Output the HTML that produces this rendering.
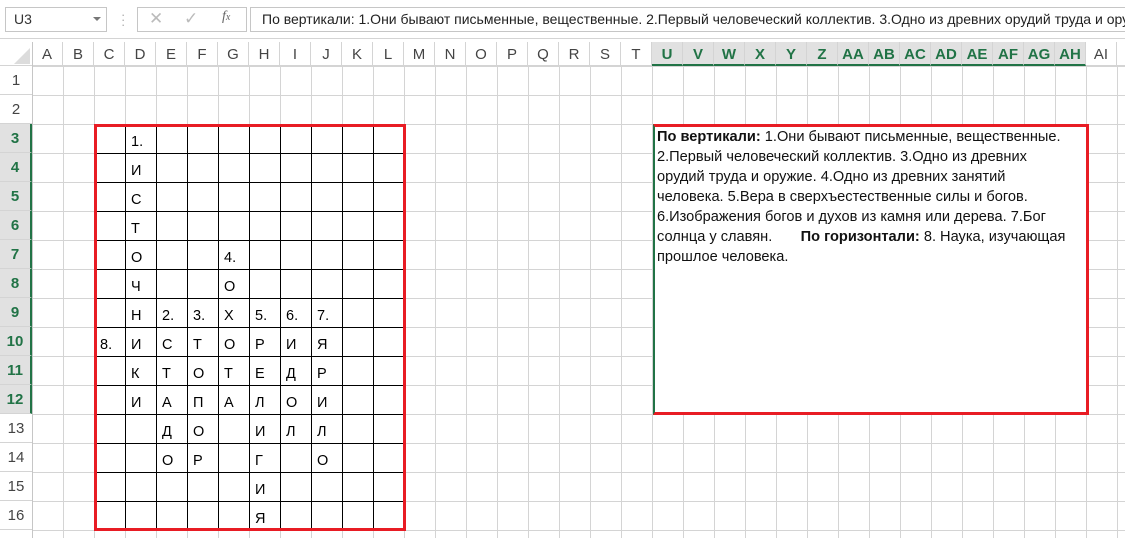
<!DOCTYPE html>
<html><head><meta charset="utf-8"><style>
*{margin:0;padding:0;box-sizing:border-box}
body{width:1125px;height:538px;overflow:hidden;background:#fff;font-family:"Liberation Sans","DejaVu Sans",sans-serif;position:relative}
.a{position:absolute}
#grid{left:32px;top:66px;width:1093px;height:472px;
background-image:linear-gradient(to right,#d4d4d4 1px,transparent 1px),linear-gradient(to bottom,#d4d4d4 1px,transparent 1px);
background-size:31px 29px;background-position:0 0}
.ch{position:absolute;top:42px;height:24px;width:31px;text-align:center;font-size:15px;line-height:25px;color:#444;border-right:1px solid #d4d4d4}
.ch.s{background:#e1e1e1;color:#217346;font-weight:bold;border-bottom:2px solid #217346}
.rh{position:absolute;left:0;width:32px;height:29px;text-align:center;font-size:15px;line-height:30px;color:#444;border-bottom:1px solid #d4d4d4}
.rh.s{background:#e1e1e1;color:#217346;font-weight:bold;border-right:2px solid #217346}
.c{position:absolute;font-size:14.5px;color:#000;line-height:29px;padding-left:6px;padding-top:4px}
#cw{left:94px;top:124px;width:312px;height:407px;background-color:#fff;
background-image:linear-gradient(to right,#000 1px,transparent 1px),linear-gradient(to bottom,#000 1px,transparent 1px);
background-size:31px 29px;background-position:0 0;background-origin:border-box;background-clip:border-box;border:3px solid #e81c24}
#tb{left:653px;top:124px;width:436px;height:291px;background:#fff;border:3px solid #e81c24;border-left:2px solid #217346}
#tb div{font-size:14.6px;line-height:20px;white-space:nowrap;color:#111}
</style></head><body>
<div class="a" style="left:0;top:0;width:1125px;height:40px;background:#fff"></div>
<div class="a" style="left:5px;top:7px;width:102px;height:25px;border:1px solid #c6c6c6;font-size:14px;line-height:23px;padding-left:8px;color:#333">U3</div>
<div class="a" style="left:93px;top:17px;width:0;height:0;border-left:4px solid transparent;border-right:4px solid transparent;border-top:4px solid #777"></div>
<div class="a" style="left:121px;top:12px;color:#aaa;font-size:13px;line-height:5px">·<br>·<br>·</div>
<div class="a" style="left:137px;top:7px;width:110px;height:25px;border:1px solid #c6c6c6"></div>
<div class="a" style="left:149px;top:9px;color:#bbb;font-size:17px">✕</div>
<div class="a" style="left:184px;top:9px;color:#bbb;font-size:17px">✓</div>
<div class="a" style="left:222px;top:9px;color:#666;font-size:14px;font-style:italic;font-family:'Liberation Serif',serif">f<span style="font-size:10px">x</span></div>
<div class="a" style="left:250px;top:7px;width:880px;height:25px;border:1px solid #c6c6c6;font-size:14px;line-height:23px;padding-left:11px;white-space:nowrap;overflow:hidden;color:#222">По вертикали: 1.Они бывают письменные, вещественные. 2.Первый человеческий коллектив. 3.Одно из древних орудий труда и оружие.</div>
<div class="a" style="left:0;top:38px;width:1125px;height:1px;background:#d4d4d4"></div>

<div id="grid" class="a"></div>
<div class="a" style="left:0;top:42px;width:1125px;height:24px;border-bottom:1px solid #d4d4d4"></div>
<div class="a" style="left:14px;top:48px;width:0;height:0;border-left:16px solid transparent;border-bottom:16px solid #dcdcdc"></div>
<div class="a" style="left:32px;top:42px;width:1px;height:496px;background:#c6c6c6"></div>

<div class="ch" style="left:32px">A</div><div class="ch" style="left:63px">B</div><div class="ch" style="left:94px">C</div><div class="ch" style="left:125px">D</div><div class="ch" style="left:156px">E</div><div class="ch" style="left:187px">F</div><div class="ch" style="left:218px">G</div><div class="ch" style="left:249px">H</div><div class="ch" style="left:280px">I</div><div class="ch" style="left:311px">J</div><div class="ch" style="left:342px">K</div><div class="ch" style="left:373px">L</div><div class="ch" style="left:404px">M</div><div class="ch" style="left:435px">N</div><div class="ch" style="left:466px">O</div><div class="ch" style="left:497px">P</div><div class="ch" style="left:528px">Q</div><div class="ch" style="left:559px">R</div><div class="ch" style="left:590px">S</div><div class="ch" style="left:621px">T</div>
<div class="ch s" style="left:652px">U</div><div class="ch s" style="left:683px">V</div><div class="ch s" style="left:714px">W</div><div class="ch s" style="left:745px">X</div><div class="ch s" style="left:776px">Y</div><div class="ch s" style="left:807px">Z</div><div class="ch s" style="left:838px">AA</div><div class="ch s" style="left:869px">AB</div><div class="ch s" style="left:900px">AC</div><div class="ch s" style="left:931px">AD</div><div class="ch s" style="left:962px">AE</div><div class="ch s" style="left:993px">AF</div><div class="ch s" style="left:1024px">AG</div><div class="ch s" style="left:1055px">AH</div><div class="ch" style="left:1086px">AI</div>

<div class="rh" style="top:66px">1</div><div class="rh" style="top:95px">2</div>
<div class="rh s" style="top:124px">3</div><div class="rh s" style="top:153px">4</div><div class="rh s" style="top:182px">5</div><div class="rh s" style="top:211px">6</div><div class="rh s" style="top:240px">7</div><div class="rh s" style="top:269px">8</div><div class="rh s" style="top:298px">9</div><div class="rh s" style="top:327px">10</div><div class="rh s" style="top:356px">11</div><div class="rh s" style="top:385px">12</div>
<div class="rh" style="top:414px">13</div><div class="rh" style="top:443px">14</div><div class="rh" style="top:472px">15</div><div class="rh" style="top:501px">16</div>

<div id="cw" class="a"></div>
<div class="c" style="left:125px;top:124px">1.</div>
<div class="c" style="left:125px;top:153px">И</div>
<div class="c" style="left:125px;top:182px">С</div>
<div class="c" style="left:125px;top:211px">Т</div>
<div class="c" style="left:125px;top:240px">О</div>
<div class="c" style="left:218px;top:240px">4.</div>
<div class="c" style="left:125px;top:269px">Ч</div>
<div class="c" style="left:218px;top:269px">О</div>
<div class="c" style="left:125px;top:298px">Н</div>
<div class="c" style="left:156px;top:298px">2.</div>
<div class="c" style="left:187px;top:298px">3.</div>
<div class="c" style="left:218px;top:298px">Х</div>
<div class="c" style="left:249px;top:298px">5.</div>
<div class="c" style="left:280px;top:298px">6.</div>
<div class="c" style="left:311px;top:298px">7.</div>
<div class="c" style="left:94px;top:327px">8.</div>
<div class="c" style="left:125px;top:327px">И</div>
<div class="c" style="left:156px;top:327px">С</div>
<div class="c" style="left:187px;top:327px">Т</div>
<div class="c" style="left:218px;top:327px">О</div>
<div class="c" style="left:249px;top:327px">Р</div>
<div class="c" style="left:280px;top:327px">И</div>
<div class="c" style="left:311px;top:327px">Я</div>
<div class="c" style="left:125px;top:356px">К</div>
<div class="c" style="left:156px;top:356px">Т</div>
<div class="c" style="left:187px;top:356px">О</div>
<div class="c" style="left:218px;top:356px">Т</div>
<div class="c" style="left:249px;top:356px">Е</div>
<div class="c" style="left:280px;top:356px">Д</div>
<div class="c" style="left:311px;top:356px">Р</div>
<div class="c" style="left:125px;top:385px">И</div>
<div class="c" style="left:156px;top:385px">А</div>
<div class="c" style="left:187px;top:385px">П</div>
<div class="c" style="left:218px;top:385px">А</div>
<div class="c" style="left:249px;top:385px">Л</div>
<div class="c" style="left:280px;top:385px">О</div>
<div class="c" style="left:311px;top:385px">И</div>
<div class="c" style="left:156px;top:414px">Д</div>
<div class="c" style="left:187px;top:414px">О</div>
<div class="c" style="left:249px;top:414px">И</div>
<div class="c" style="left:280px;top:414px">Л</div>
<div class="c" style="left:311px;top:414px">Л</div>
<div class="c" style="left:156px;top:443px">О</div>
<div class="c" style="left:187px;top:443px">Р</div>
<div class="c" style="left:249px;top:443px">Г</div>
<div class="c" style="left:311px;top:443px">О</div>
<div class="c" style="left:249px;top:472px">И</div>
<div class="c" style="left:249px;top:501px">Я</div>

<div id="tb" class="a" style="padding:0 0 0 2px">
<div><b>По вертикали:</b> 1.Они бывают письменные, вещественные.</div>
<div>2.Первый человеческий коллектив. 3.Одно из древних</div>
<div>орудий труда и оружие. 4.Одно из древних занятий</div>
<div>человека. 5.Вера в сверхъестественные силы и богов.</div>
<div>6.Изображения богов и духов из камня или дерева. 7.Бог</div>
<div>солнца у славян.&nbsp;&nbsp;&nbsp;&nbsp;&nbsp;&nbsp; <b>По горизонтали:</b> 8. Наука, изучающая</div>
<div>прошлое человека.</div>
</div>
</body></html>
